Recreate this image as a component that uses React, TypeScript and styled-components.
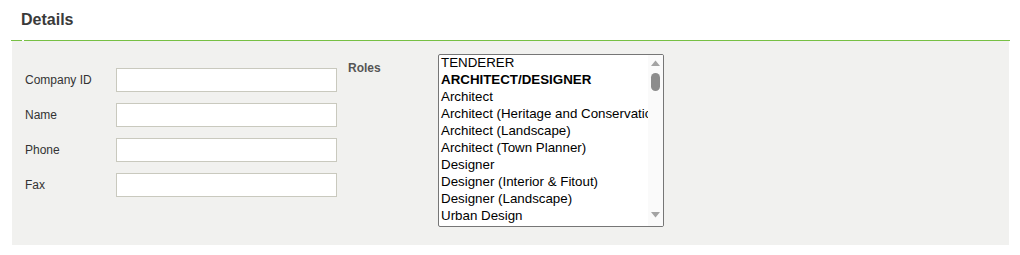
import styled, {createGlobalStyle} from "styled-components";

const GlobalStyle = createGlobalStyle`
    body {
        margin: 0;
        background: #ffffff;
        font-family: "Liberation Sans", Arial, sans-serif;
    }
`

const fields = ['Company ID', 'Name', 'Phone', 'Fax']

type RoleType = {
    label: string
    group?: boolean
}

const roles: RoleType[] = [
    {label: 'TENDERER'},
    {label: 'ARCHITECT/DESIGNER', group: true},
    {label: 'Architect'},
    {label: 'Architect (Heritage and Conservation)'},
    {label: 'Architect (Landscape)'},
    {label: 'Architect (Town Planner)'},
    {label: 'Designer'},
    {label: 'Designer (Interior & Fitout)'},
    {label: 'Designer (Landscape)'},
    {label: 'Urban Design'},
]

export default function App() {
    return (
        <Page>
            <GlobalStyle/>
            <Title>Details</Title>
            <Rule/>
            <Panel>
                <Fields>
                    {fields.map(f => (
                        <FieldRow key={f}>
                            <Label>{f}</Label>
                            <Input type="text"/>
                        </FieldRow>
                    ))}
                </Fields>
                <Roles>
                    <RolesLabel>Roles</RolesLabel>
                    <ListBox role="listbox" aria-multiselectable="true">
                        <Options>
                            {roles.map(r => (
                                <Option key={r.label} role="option" $group={r.group}>{r.label}</Option>
                            ))}
                        </Options>
                        <ScrollBar>
                            <svg width="9" height="6" viewBox="0 0 9 6">
                                <path d="M4.5 0.5 L9 6 L0 6 Z" fill="#a3a3a3"/>
                            </svg>
                            <Thumb/>
                            <Spacer/>
                            <svg width="9" height="6" viewBox="0 0 9 6">
                                <path d="M0 0 L9 0 L4.5 5.5 Z" fill="#a3a3a3"/>
                            </svg>
                        </ScrollBar>
                    </ListBox>
                </Roles>
            </Panel>
        </Page>
    );
}

const Page = styled.div`
    width: 1020px;
    padding: 0 10px 0 11px;
    box-sizing: border-box;
`

const Title = styled.h2`
    margin: 0;
    padding: 11px 0 0 10px;
    height: 40px;
    box-sizing: border-box;
    font-size: 16px;
    font-weight: 700;
    line-height: 18px;
    color: #3a3a3a;
`

const Rule = styled.div`
    height: 1px;
    background: linear-gradient(to right, #77c044 0, #77c044 11px, #ffffff 11px, #ffffff 13px, #77c044 13px, #77c044 100%);
`

const Panel = styled.section`
    margin: 0 1px;
    height: 204px;
    box-sizing: border-box;
    padding: 13px 0 0 13px;
    background: #f1f1ef;
    display: flex;
    align-items: flex-start;
`

const Fields = styled.div`
    margin-top: 14px;
    display: flex;
    flex-direction: column;
    gap: 11px;
`

const FieldRow = styled.div`
    display: flex;
    align-items: center;
`

const Label = styled.label`
    width: 91px;
    font-size: 12px;
    color: #333;
`

const Input = styled.input`
    width: 221px;
    height: 24px;
    box-sizing: border-box;
    margin: 0;
    border: 1px solid #c9c9be;
    background: #ffffff;
    outline: none;
`

const Roles = styled.div`
    margin-left: 11px;
    display: flex;
    align-items: flex-start;
`

const RolesLabel = styled.span`
    width: 90px;
    margin-top: 7px;
    font-size: 12px;
    font-weight: 700;
    color: #555;
`

const ListBox = styled.div`
    width: 226px;
    height: 173px;
    box-sizing: border-box;
    border: 1px solid #767676;
    border-radius: 2px;
    background: #ffffff;
    display: flex;
    overflow: hidden;
`

const Options = styled.div`
    flex: 1;
    min-width: 0;
    overflow: hidden;
`

const Option = styled.div<{ $group?: boolean }>`
    height: 17px;
    box-sizing: border-box;
    padding: 0 2px 1px;
    font-size: 13.333px;
    line-height: 16px;
    font-weight: ${p => p.$group ? 700 : 400};
    color: #000;
    white-space: nowrap;
`

const ScrollBar = styled.div`
    width: 15px;
    flex-shrink: 0;
    background: #fafafa;
    display: flex;
    flex-direction: column;
    align-items: center;
    padding: 5px 0 8px;
    box-sizing: border-box;
`

const Thumb = styled.div`
    width: 9px;
    height: 18px;
    margin-top: 7px;
    border-radius: 5px;
    background: #8c8c8c;
`

const Spacer = styled.div`
    flex: 1;
`
